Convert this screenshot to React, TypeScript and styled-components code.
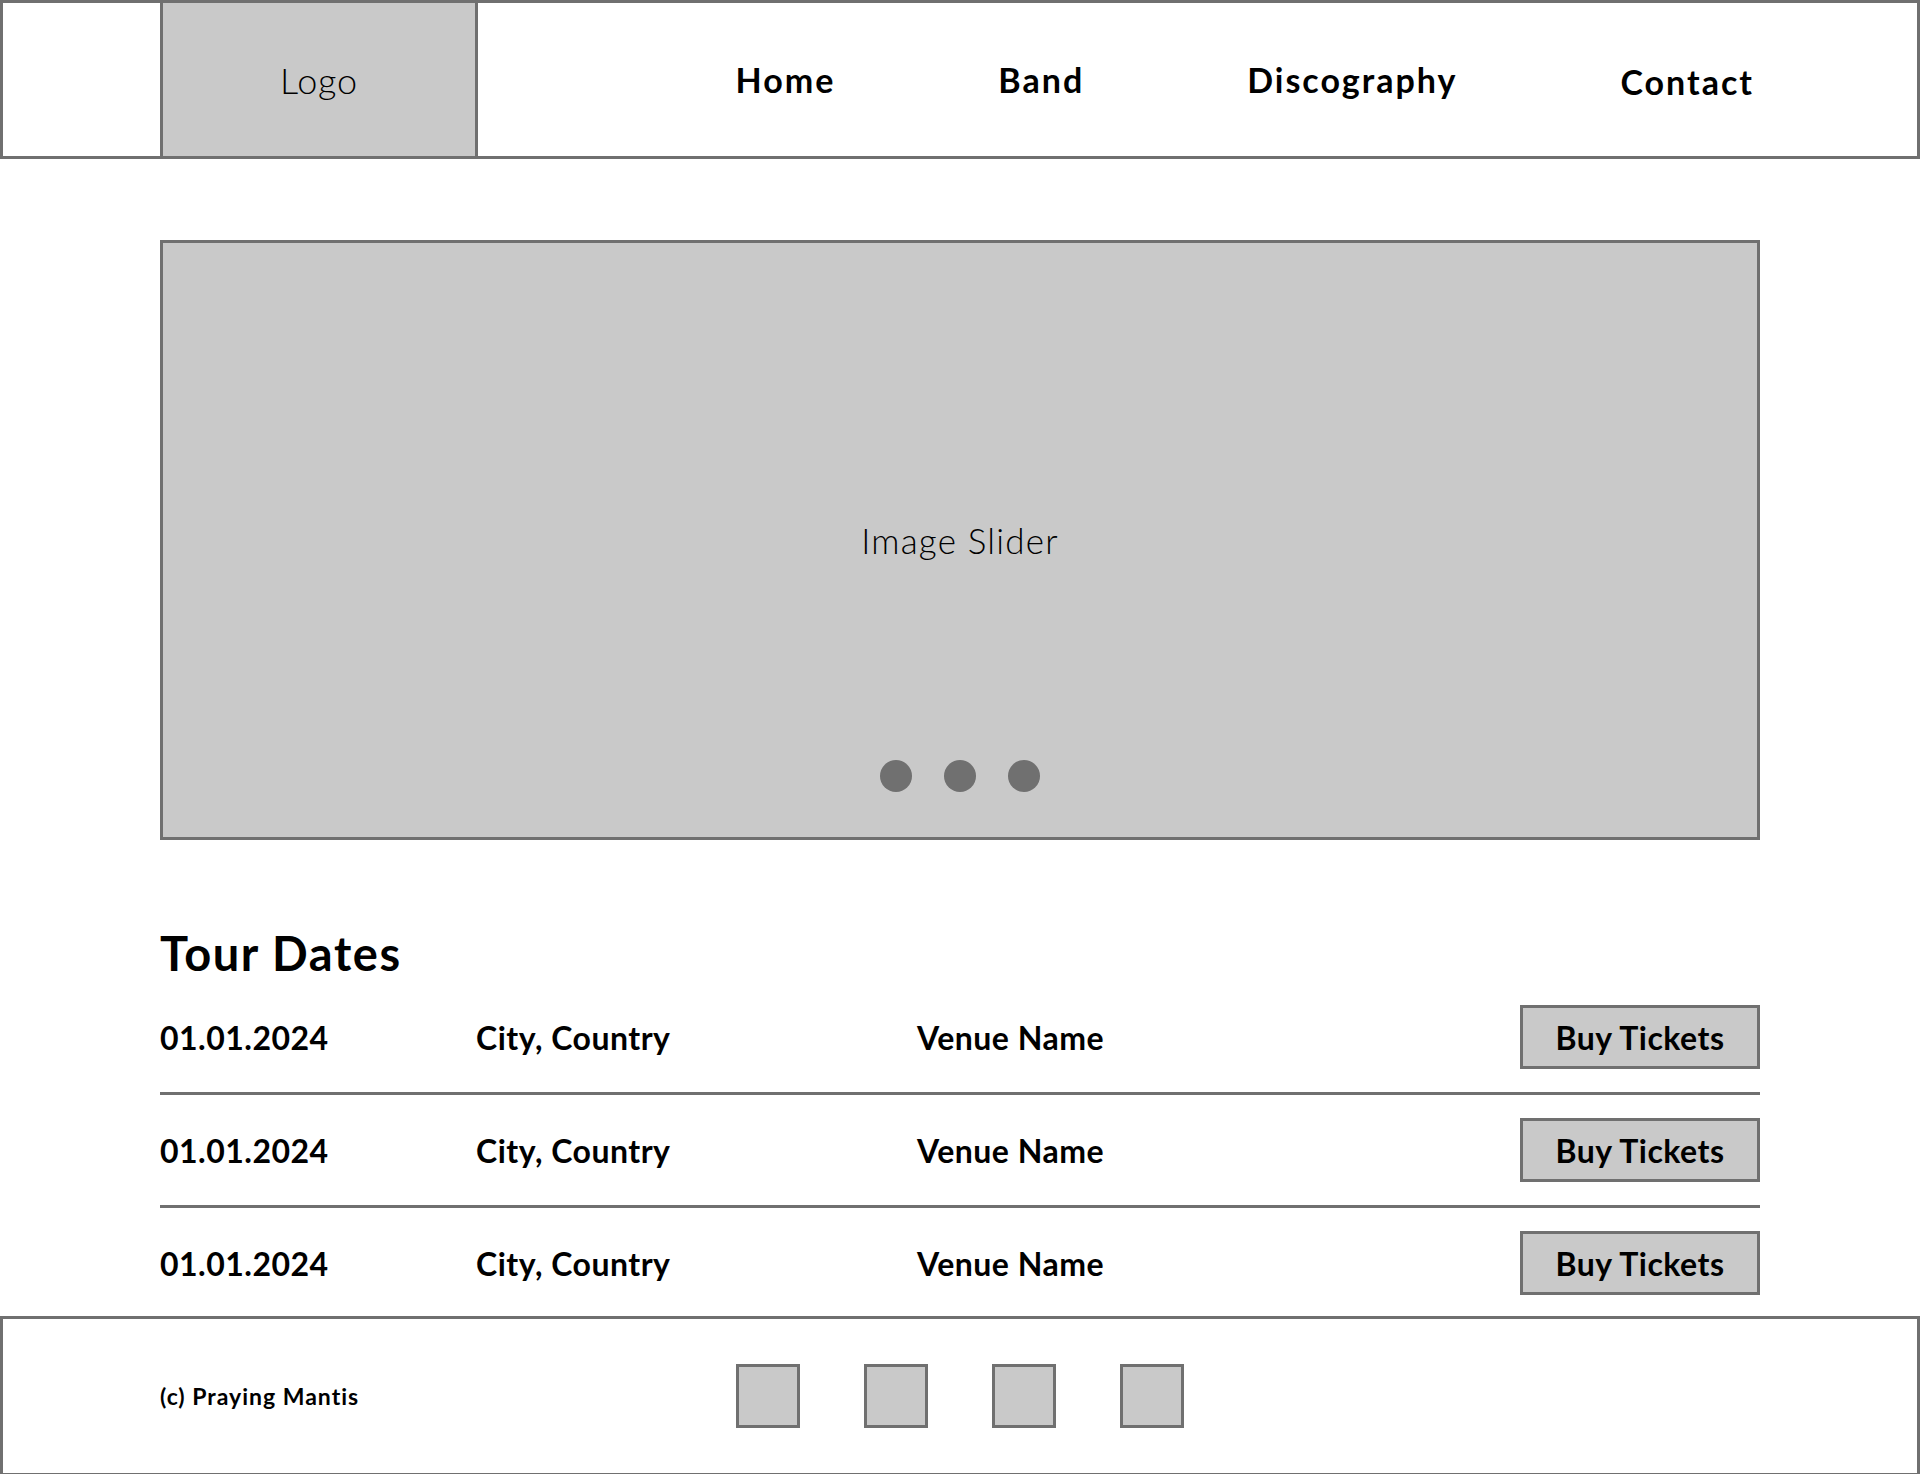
import React from 'react';
import styled, { createGlobalStyle } from 'styled-components';

const GlobalStyle = createGlobalStyle`
  body {
    margin: 0;
    background: #ffffff;
    font-family: Lato, "Noto Sans", sans-serif;
    color: #000000;
  }
`;

const Page = styled.div`
  width: 1920px;
  display: flex;
  flex-direction: column;
`;

const Header = styled.header`
  height: 159px;
  box-sizing: border-box;
  border: 3px solid #707070;
  display: flex;
  align-items: stretch;
  padding-left: 157px;
`;

const LogoBox = styled.div`
  width: 318px;
  box-sizing: border-box;
  background: #c9c9c9;
  border-left: 3px solid #707070;
  border-right: 3px solid #707070;
  display: flex;
  align-items: center;
  justify-content: center;
  font-size: 36px;
  font-weight: 300;
  letter-spacing: 0.8px;
`;

const Nav = styled.nav`
  margin-left: auto;
  display: flex;
  align-items: center;
  gap: 163px;
  padding-right: 163px;
`;

const NavLink = styled.a<{ $drop?: number }>`
  font-size: 34px;
  font-weight: 700;
  letter-spacing: 2px;
  color: #000000;
  text-decoration: none;
  padding-top: ${p => p.$drop || 0}px;
`;

const Main = styled.main`
  padding: 81px 160px 0;
`;

const Slider = styled.section`
  height: 600px;
  box-sizing: border-box;
  border: 3px solid #707070;
  background: #c9c9c9;
  display: flex;
  flex-direction: column;
  align-items: center;
  justify-content: center;
  position: relative;
`;

const SliderLabel = styled.span`
  font-size: 35px;
  font-weight: 300;
  letter-spacing: 1.2px;
`;

const Dots = styled.div`
  position: absolute;
  bottom: 45px;
  display: flex;
  gap: 32px;
`;

const Dot = styled.span`
  width: 32px;
  height: 32px;
  border-radius: 50%;
  background: #707070;
`;

const Title = styled.h2`
  margin: 84px 0 0;
  font-size: 47px;
  font-weight: 700;
  letter-spacing: 1.6px;
  line-height: 58px;
`;

const TourRow = styled.div`
  display: flex;
  align-items: center;
  padding: 23px 0;
  border-bottom: 3px solid #707070;
  font-size: 32px;
  font-weight: 700;
  letter-spacing: 0.5px;

  &:last-child {
    border-bottom: none;
    padding-bottom: 21px;
  }
`;

const Cell = styled.span<{ $w: number }>`
  width: ${p => p.$w}px;
`;

const BuyButton = styled.button`
  margin-left: auto;
  width: 240px;
  height: 64px;
  box-sizing: border-box;
  border: 3px solid #707070;
  background: #c9c9c9;
  font-family: inherit;
  font-size: 32px;
  font-weight: 700;
  letter-spacing: 0.5px;
  color: #000000;
  padding: 0;
`;

const Footer = styled.footer`
  height: 160px;
  box-sizing: border-box;
  border: 3px solid #707070;
  padding: 0 157px;
  display: grid;
  grid-template-columns: 1fr auto 1fr;
  align-items: center;
`;

const Copyright = styled.span`
  font-size: 23px;
  font-weight: 700;
  letter-spacing: 1px;
`;

const Socials = styled.div`
  display: flex;
  gap: 64px;
`;

const SocialBox = styled.a`
  width: 64px;
  height: 64px;
  box-sizing: border-box;
  border: 3px solid #707070;
  background: #c9c9c9;
`;

const dates = [
  { date: '01.01.2024', city: 'City, Country', venue: 'Venue Name' },
  { date: '01.01.2024', city: 'City, Country', venue: 'Venue Name' },
  { date: '01.01.2024', city: 'City, Country', venue: 'Venue Name' },
];

const App: React.FC = () => {
  return (
    <Page>
      <GlobalStyle />
      <Header>
        <LogoBox>Logo</LogoBox>
        <Nav>
          <NavLink>Home</NavLink>
          <NavLink>Band</NavLink>
          <NavLink>Discography</NavLink>
          <NavLink $drop={3}>Contact</NavLink>
        </Nav>
      </Header>
      <Main>
        <Slider>
          <SliderLabel>Image Slider</SliderLabel>
          <Dots>
            <Dot />
            <Dot />
            <Dot />
          </Dots>
        </Slider>
        <Title>Tour Dates</Title>
        <div>
          {dates.map((d, index) => (
            <TourRow key={`${d.date} ${index}`}>
              <Cell $w={316}>{d.date}</Cell>
              <Cell $w={441}>{d.city}</Cell>
              <Cell $w={300}>{d.venue}</Cell>
              <BuyButton>Buy Tickets</BuyButton>
            </TourRow>
          ))}
        </div>
      </Main>
      <Footer>
        <Copyright>(c) Praying Mantis</Copyright>
        <Socials>
          <SocialBox />
          <SocialBox />
          <SocialBox />
          <SocialBox />
        </Socials>
        <span />
      </Footer>
    </Page>
  );
};

export default App;
